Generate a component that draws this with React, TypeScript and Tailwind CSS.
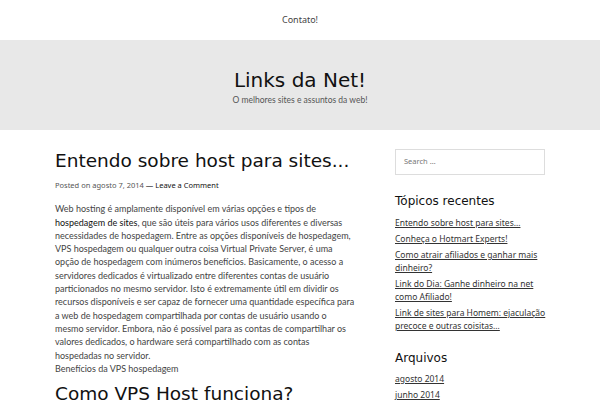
import React from 'react'

const heading = { fontFamily: '"DejaVu Sans", sans-serif' }
const body = { fontFamily: '"Noto Sans", sans-serif' }
const text = { fontFamily: 'Lato, sans-serif' }

const recent = [
  'Entendo sobre host para sites…',
  'Conheça o Hotmart Experts!',
  'Como atrair afiliados e ganhar mais dinheiro?',
  'Link do Dia: Ganhe dinheiro na net como Afiliado!',
  'Link de sites para Homem: ejaculação precoce e outras coisitas…',
]

export default function App() {
  return (
    <div className="w-[600px] h-[400px] overflow-hidden bg-white text-[#333]" style={body}>
      {/* Top menu */}
      <div className="h-10 flex items-center justify-center text-[9px] text-[#444]">Contato!</div>

      {/* Site header */}
      <div className="h-[90px] bg-[#e8e8e8] flex flex-col items-center justify-center">
        <h1 className="text-[20px] leading-7 text-[#111] mt-[2px]" style={heading}>Links da Net!</h1>
        <p className="text-[8.5px] text-[#555]" style={text}>O melhores sites e assuntos da web!</p>
      </div>

      <div className="flex px-[55px] pt-[17px] gap-10">
        {/* Main */}
        <div className="w-[300px] shrink-0">
          <h2 className="text-[18.5px] leading-7 text-[#111] whitespace-nowrap" style={heading}>Entendo sobre host para sites...</h2>
          <div className="text-[7.5px] text-[#555] mt-[5px]">
            Posted on agosto 7, 2014 <span className="text-[#111]">— Leave a Comment</span>
          </div>
          <p className="text-[9px] leading-[13.3px] text-[#444] mt-[11px]" style={text}>
            Web hosting é amplamente disponível em várias opções e tipos de{' '}
            <span className="text-[#111]">hospedagem de sites</span>, que são úteis para vários usos diferentes e diversas
            necessidades de hospedagem. Entre as opções disponíveis de hospedagem, VPS hospedagem ou qualquer outra coisa
            Virtual Private Server, é uma opção de hospedagem com inúmeros benefícios. Basicamente, o acesso a servidores
            dedicados é virtualizado entre diferentes contas de usuário particionados no mesmo servidor. Isto é
            extremamente útil em dividir os recursos disponíveis e ser capaz de fornecer uma quantidade específica para a
            web de hospedagem compartilhada por contas de usuário usando o mesmo servidor. Embora, não é possível para as
            contas de compartilhar os valores dedicados, o hardware será compartilhado com as contas hospedadas no
            servidor.
            <br />
            Benefícios da VPS hospedagem
          </p>
          <h2 className="text-[18.5px] leading-7 text-[#111] mt-[5px] whitespace-nowrap" style={heading}>Como VPS Host funciona?</h2>
        </div>

        {/* Sidebar */}
        <div className="w-[155px] shrink-0 pt-[2px]">
          <div className="w-[150px] h-[26px] border border-[#ddd] flex items-center px-2 text-[7.5px] text-[#777]">Search …</div>
          <h3 className="text-[12px] text-[#111] mt-[17px]" style={heading}>Tópicos recentes</h3>
          <ul className="mt-[6px] space-y-[3px]">
            {recent.map((t) => (
              <li key={t} className="text-[8.5px] leading-[13px] text-[#333] underline">{t}</li>
            ))}
          </ul>
          <h3 className="text-[12px] text-[#111] mt-[17px]" style={heading}>Arquivos</h3>
          <ul className="mt-[5px] space-y-[3px]">
            <li className="text-[8.5px] leading-[13px] text-[#333] underline">agosto 2014</li>
            <li className="text-[8.5px] leading-[13px] text-[#333] underline">junho 2014</li>
          </ul>
        </div>
      </div>
    </div>
  )
}
